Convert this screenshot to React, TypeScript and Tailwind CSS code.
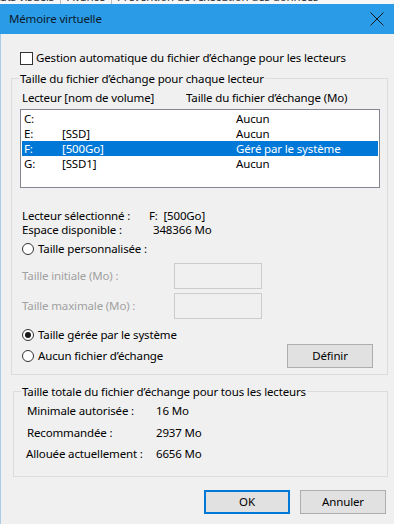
import React from "react";

function Radio({ checked }: { checked?: boolean }) {
  return (
    <span className="w-[12px] h-[12px] rounded-full border border-[#333333] bg-white flex items-center justify-center shrink-0">
      {checked && <span className="w-[6px] h-[6px] rounded-full bg-[#1a1a1a]" />}
    </span>
  );
}

const rows = [
  { d: "C:", v: "", s: "Aucun", sel: false },
  { d: "E:", v: "[SSD]", s: "Aucun", sel: false },
  { d: "F:", v: "[500Go]", s: "Géré par le système", sel: true },
  { d: "G:", v: "[SSD1]", s: "Aucun", sel: false },
];

export default function App() {
  return (
    <div className="w-[394px] h-[524px] overflow-hidden bg-[#f0f0f0] text-[11.5px] tracking-[-0.15px] leading-[14px] text-black font-['Noto_Sans',sans-serif]">
      {/* parent dialog strip */}
      <div className="h-[4px] overflow-hidden bg-[#f7f7f7]">
        <div className="flex -mt-[10px] h-[14px] text-[#333] whitespace-nowrap">
          <span className="-ml-[10px] pr-[6px] border-r border-[#bbb]">états visuels</span>
          <span className="px-[6px] border-r border-[#bbb]">Avancé</span>
          <span className="px-[5px]">Prévention de l'exécution des données</span>
        </div>
      </div>
      {/* title bar */}
      <div className="h-[30px] bg-[#2a9be6] flex items-center justify-between pl-[9px] pr-[8px]">
        <span className="text-[#0c1a2b]">Mémoire virtuelle</span>
        <svg width="16" height="16" viewBox="0 0 16 16" className="mr-[1px]">
          <path d="M1.5 1.5 L14.5 14.5 M14.5 1.5 L1.5 14.5" stroke="#1a1a1a" strokeWidth="1" />
        </svg>
      </div>
      {/* body */}
      <div className="h-[490px] border-l border-[#a9cbe6] flex flex-col">
        <div className="mt-[17px] ml-[19px] h-[14px] flex items-center">
          <span className="w-[13px] h-[13px] border border-[#333333] bg-white shrink-0" />
          <span className="ml-[3px]">Gestion automatique du fichier d’échange pour les lecteurs</span>
        </div>

        <fieldset className="mt-[7px] ml-[10px] w-[377px] border border-[#dcdcdc] pb-[6px]">
          <legend className="ml-[7px] px-[1px] leading-[13px]">Taille du fichier d’échange pour chaque lecteur</legend>
          <div className="mt-[6px] flex">
            <span className="ml-[10px] w-[164px]">Lecteur [nom de volume]</span>
            <span>Taille du fichier d’échange (Mo)</span>
          </div>
          <div className="mt-[4px] ml-[8px] w-[360px] h-[79px] border border-[#828790] bg-white p-[1px] leading-[15px]">
            {rows.map((r) => (
              <div
                key={r.d}
                className={`h-[15px] flex pl-[2px] ${r.sel ? "bg-[#0078d7] text-white" : ""}`}
              >
                <span className="w-[38px]">{r.d}</span>
                <span className="w-[174px]">{r.v}</span>
                <span>{r.s}</span>
              </div>
            ))}
          </div>
          <div className="mt-[21px] ml-[10px] flex">
            <span className="w-[127px]">Lecteur sélectionné :</span>
            <span>F:&nbsp;&nbsp;[500Go]</span>
          </div>
          <div className="ml-[10px] flex">
            <span className="w-[131px]">Espace disponible :</span>
            <span>348366 Mo</span>
          </div>
          <div className="mt-[5px] ml-[10px] flex items-center h-[14px]">
            <Radio />
            <span className="ml-[4px]">Taille personnalisée :</span>
          </div>
          <div className="mt-[7px] ml-[10px] flex items-center">
            <span className="w-[152px] text-[#a0a0a0]">Taille initiale (Mo) :</span>
            <span className="w-[88px] h-[26px] border border-[#cccccc]" />
          </div>
          <div className="mt-[4px] ml-[10px] flex items-center">
            <span className="w-[152px] text-[#a0a0a0]">Taille maximale (Mo) :</span>
            <span className="w-[88px] h-[26px] border border-[#cccccc]" />
          </div>
          <div className="mt-[9px] ml-[10px] flex items-center h-[14px]">
            <Radio checked />
            <span className="ml-[4px]">Taille gérée par le système</span>
          </div>
          <div className="mt-[2px] ml-[10px] mr-[14px] flex items-center justify-between h-[24px]">
            <div className="flex items-center">
              <Radio />
              <span className="ml-[4px]">Aucun fichier d’échange</span>
            </div>
            <button className="w-[86px] h-[24px] bg-[#e1e1e1] border border-[#adadad]">Définir</button>
          </div>
        </fieldset>

        <fieldset className="mt-[10px] ml-[12px] w-[375px] border border-[#dcdcdc] pb-[15px]">
          <legend className="ml-[7px] px-[1px] leading-[13px]">Taille totale du fichier d’échange pour tous les lecteurs</legend>
          <div className="mt-[6px] ml-[13px] flex">
            <span className="w-[129px]">Minimale autorisée :</span>
            <span>16 Mo</span>
          </div>
          <div className="mt-[8px] ml-[13px] flex">
            <span className="w-[129px]">Recommandée :</span>
            <span>2937 Mo</span>
          </div>
          <div className="mt-[7px] ml-[12px] flex">
            <span className="w-[130px]">Allouée actuellement :</span>
            <span>6656 Mo</span>
          </div>
        </fieldset>

        <div className="mt-[13px] mr-[8px] flex justify-end gap-[10px]">
          <button className="w-[86px] h-[24px] bg-[#e1e1e1] border-2 border-[#0078d7]">OK</button>
          <button className="w-[86px] h-[24px] bg-[#e1e1e1] border border-[#adadad]">Annuler</button>
        </div>
      </div>
    </div>
  );
}
